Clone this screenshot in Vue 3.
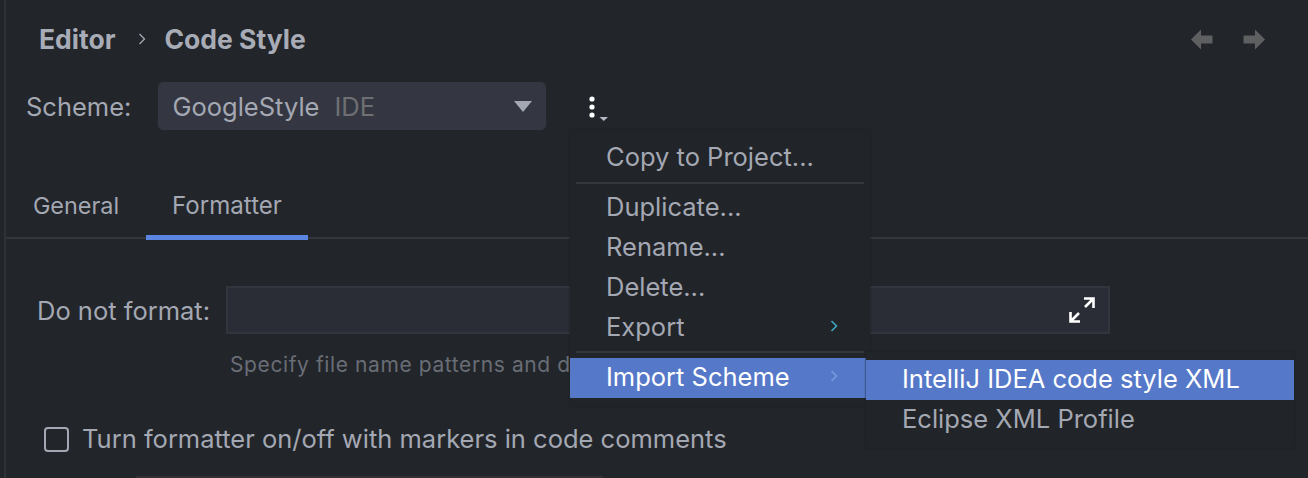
<script setup>
const items = [
  { label: 'Duplicate...' },
  { label: 'Rename...' },
  { label: 'Delete...' },
  { label: 'Export', arrow: true }
]
</script>

<template>
  <div class="page">
    <div class="rail"></div>
    <header class="crumbs">
      <span class="crumb">Editor</span>
      <svg class="sep" width="10" height="14" viewBox="0 0 10 14"><path d="M2.5 2 L7.500 7 L2.5 12" fill="none" stroke="#a4a8b3" stroke-width="1.300"/></svg>
      <span class="crumb second">Code Style</span>
      <div class="nav">
        <svg width="22" height="21" viewBox="0 0 22 21"><path d="M0 10.5 L10 0.5 V6.5 H21.5 V14.5 H10 V20.5 Z" fill="#5d5f61"/></svg>
        <svg width="22" height="21" viewBox="0 0 22 21"><path d="M22 10.5 L12 0.5 V6.5 H0.5 V14.5 H12 V20.5 Z" fill="#5d5f61"/></svg>
      </div>
    </header>

    <div class="scheme">
      <span class="label">Scheme:</span>
      <div class="select">
        <span>GoogleStyle</span><span class="ide">IDE</span>
        <svg class="caret" width="18" height="11" viewBox="0 0 18 11"><path d="M0 0 H18 L9 11 Z" fill="#a3a8b3"/></svg>
      </div>
      <div class="more">
        <svg width="24" height="28" viewBox="0 0 24 28">
          <circle cx="8" cy="5" r="2.6" fill="#fff"/>
          <circle cx="8" cy="13" r="2.6" fill="#fff"/>
          <circle cx="8" cy="21" r="2.6" fill="#fff"/>
          <path d="M15.500 23 H24 L19.750 27 Z" fill="#b4b8c0"/>
        </svg>
      </div>
    </div>

    <nav class="tabs">
      <span class="tab">General</span>
      <span class="tab active">Formatter</span>
    </nav>

    <div class="format">
      <span class="label">Do not format:</span>
      <div class="input">
        <svg width="26" height="26" viewBox="0 0 26 26">
          <path d="M15 1.500 H24.500 V11 M24.500 1.500 L16 10" fill="none" stroke="#fff" stroke-width="2.600"/>
          <path d="M1.500 15 V24.500 H11 M1.500 24.500 L10 16" fill="none" stroke="#fff" stroke-width="2.600"/>
        </svg>
      </div>
    </div>
    <p class="hint">Specify file name patterns and d</p>

    <label class="check">
      <span class="box"></span>
      <span>Turn formatter on/off with markers in code comments</span>
    </label>
    <div class="next-row"></div>

    <div class="menu">
      <div class="item first">Copy to Project...</div>
      <div class="divider"></div>
      <div v-for="it in items" :key="it.label" class="item">
        <span>{{ it.label }}</span>
        <svg v-if="it.arrow" class="arrow" width="8" height="12" viewBox="0 0 8 12"><path d="M1.500 1 L6.500 6 L1.500 11" fill="none" stroke="#3ea8c4" stroke-width="1.600"/></svg>
      </div>
      <div class="divider low"></div>
      <div class="item selected">
        <span>Import Scheme</span>
        <svg class="arrow" width="8" height="12" viewBox="0 0 8 12"><path d="M1.500 1 L6.500 6 L1.500 11" fill="none" stroke="#7a9be0" stroke-width="1.600"/></svg>
      </div>
    </div>

    <div class="submenu">
      <div class="sub-item selected">IntelliJ IDEA code style XML</div>
      <div class="sub-item">Eclipse XML Profile</div>
    </div>
  </div>
</template>

<style>
html, body { margin: 0; background: #22252a; }
</style>

<style scoped>
.page {
  position: relative;
  width: 1308px;
  height: 478px;
  overflow: hidden;
  background: #22252a;
  color: #a4a8b3;
  font-family: Inter, "Noto Sans", sans-serif;
  font-size: 25.5px;
  box-sizing: border-box;
  padding-left: 6px;
}
.rail { position: absolute; left: 4px; top: 0; bottom: 0; width: 2px; background: #2e3138; }
.crumbs { display: flex; align-items: center; height: 78px; padding-left: 33px; }
.crumb { font-weight: 700; font-size: 26.500px; color: #a8acb6; }
.sep { margin-left: 22px; margin-right: 17px; }
.nav { margin-left: auto; display: flex; gap: 30px; margin-right: 43px; }
.scheme { display: flex; align-items: center; height: 48px; margin-top: 4px; padding-left: 20px; }
.select {
  margin-left: 27px;
  width: 388px;
  height: 48px;
  box-sizing: border-box;
  padding: 0 14px;
  display: flex;
  align-items: center;
  background: #343741;
  border-radius: 5px;
}
.ide { margin-left: 15px; color: #6e6f73; }
.caret { margin-left: auto; margin-right: 0; }
.more { margin-left: 38px; height: 28px; margin-top: 4px; }
.tabs {
  display: flex;
  height: 80px;
  margin-top: 29px;
  box-sizing: border-box;
  border-bottom: 2px solid #33363d;
  align-items: stretch;
}
.tab {
  display: flex;
  align-items: center;
  justify-content: center;
  width: 140px;
  padding-top: 12px;
  height: 81px;
  box-sizing: border-box;
  font-size: 23.400px;
}
.tab.active { width: 162px; font-size: 24.100px; box-shadow: inset 0 -5px 0 #5a85e0; }
.format { display: flex; align-items: center; height: 48px; margin-top: 47px; padding-left: 31px; }
.input {
  margin-left: 16px;
  width: 884px;
  height: 48px;
  box-sizing: border-box;
  border: 2px solid #32353e;
  background: #2a2d36;
  display: flex;
  align-items: center;
  justify-content: flex-end;
  padding-right: 13px;
}
.hint { margin: 18px 0 0 224px; font-size: 21px; letter-spacing: 0.6px; line-height: 26px; color: #696d76; }
.check { display: flex; align-items: center; gap: 13px; margin: 47px 0 0 38px; line-height: 28px; }
.box { width: 25px; height: 25px; box-sizing: border-box; border: 2.500px solid #a4a8b3; border-radius: 4px; }
.next-row { width: 467px; height: 2px; margin: 23px 0 0 130px; background: #303236; }
.menu {
  position: absolute;
  left: 570px;
  top: 130px;
  width: 300px;
  height: 276px;
  box-sizing: border-box;
  background: #212429;
  box-shadow: 0 0 2px #1a1c20;
  padding-top: 7px;
}
.item {
  height: 40px;
  box-sizing: border-box;
  padding: 0 32px 2px 36px;
  display: flex;
  align-items: center;
  justify-content: space-between;
}
.divider { height: 2px; background: #33363d; margin: 5px 6px 3px; }
.divider.low { margin: 4px 6px 5px; }
.selected { background: #5578c8; color: #fff; }
.item.selected { padding-bottom: 4px; }
.arrow { flex: none; }
.submenu {
  position: absolute;
  left: 866px;
  top: 352px;
  width: 428px;
  height: 96px;
  box-sizing: border-box;
  background: #212429;
  box-shadow: 0 0 2px #1a1c20;
  padding-top: 8px;
}
.sub-item { height: 40px; box-sizing: border-box; padding: 0 0 3px 36px; display: flex; align-items: center; }
</style>
